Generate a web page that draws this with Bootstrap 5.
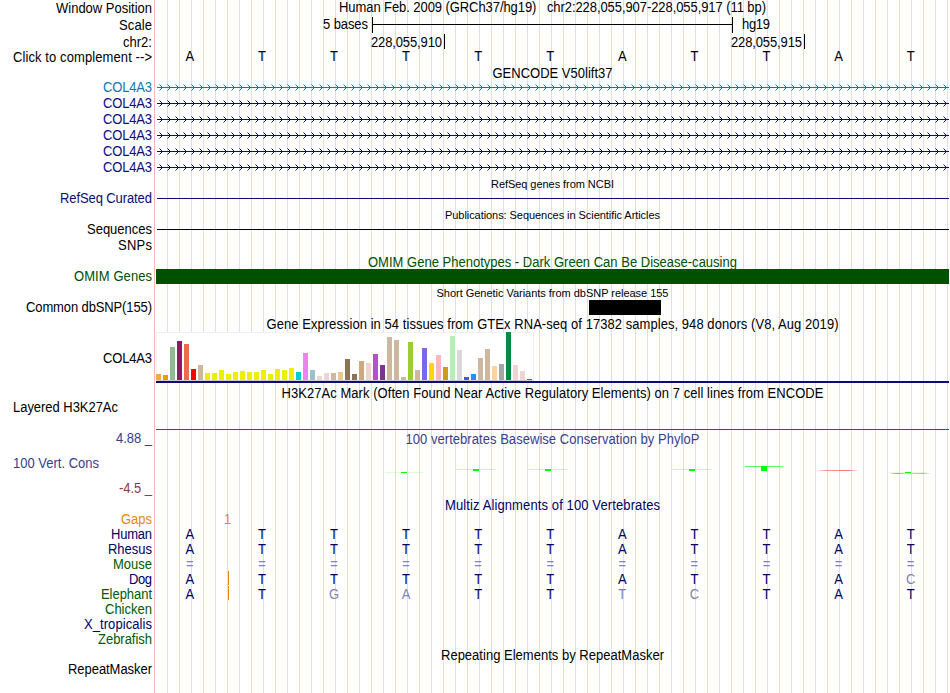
<!DOCTYPE html>
<html lang="en">

<head>
    <meta charset="UTF-8">
    <meta name="viewport" content="width=device-width, initial-scale=1.0">
    <title>Genome Browser</title>
    <link href="https://cdn.jsdelivr.net/npm/bootstrap@5.3.3/dist/css/bootstrap.min.css" rel="stylesheet">
    <style>
        body {
            font-family: "Liberation Sans", Arial, sans-serif;
            font-size: 13px;
            line-height: 15px;
            color: #000;
            background: #fff;
        }

        #browser {
            width: 949px;
            height: 693px;
        }

        .side {
            width: 155px;
            padding-right: 2px;
            border-right: 1px solid #ffb4b4;
        }

        .side.start {
            padding-left: 13px;
        }

        .lane {
            width: 793px;
            margin-left: 1px;
            background: repeating-linear-gradient(to right, transparent 0 11px, #dcdcff 11px 12px);
        }

        .lane svg {
            display: block;
        }

        /* slightly tall letters, standing on the same baseline */
        .tall {
            display: inline-block;
            transform: scaleY(1.08);
            transform-origin: 0 12px;
        }

        .fine {
            font-size: 11px;
        }

        .base {
            width: 72.09px;
            padding-right: 4.4px;
            text-align: center;
        }

        .pt-px { padding-top: 1px; }
        .gtex-side { padding-top: 19px; }
        .tier { height: 25px; }

        .navy { color: #0c0c78; }
        .sky { color: #0c78b4; }
        .omim { color: #005000; }
        .cons { color: #3c3c8c; }
        .neg { color: #8c3c3c; }
        .gap { color: #e68a0a; }
        .species { color: #000064; }
        .far { color: #005a00; }
        .faded { color: #8282b4; }

        .omim-bar {
            height: 15px;
            background: #005000;
        }

        .snp {
            width: 72px;
            height: 15px;
            margin-left: 433px;
            background: #000;
        }

        .gtex {
            width: 378px;
            height: 49px;
            background: #fff;
            border: 1px solid #f0f0f0;
            border-bottom-color: #ccc;
        }

        .gtex i {
            width: 5px;
            flex: none;
        }

        .bars {
            height: 48px;
            gap: 2px;
            margin: -1px 0 0 -1px;
        }

        .gtex-line {
            height: 2px;
            background: #0c0c78;
        }

        /* insertion mark between the first two bases */
        .gapped {
            position: relative;
        }

        .gapped::after {
            content: "";
            position: absolute;
            left: 72px;
            top: -1px;
            width: 1px;
            height: 14px;
            background: #e68a0a;
        }
    </style>
</head>

<body>

    <main id="browser" class="d-flex flex-column overflow-hidden"></main>

    <script type="text/javascript">

        const box = document.getElementById("browser");

        // text squeezed or spread to w pixels
        const txt = (t, w, cls = "") => `<span class="${cls == "fine" ? "" : "tall"} ${cls}" data-w="${w}">${t}</span>`;

        const row = (h, side, lane, cls = "", sideCls = "text-end") => {
            box.innerHTML += `
            <div class="d-flex flex-shrink-0 text-nowrap" style="height:${h}px">
                <div class="side flex-shrink-0 ${sideCls}">${side}</div>
                <div class="lane flex-shrink-0 ${cls}">${lane}</div>
            </div>`;
        }

        const title = (h, t, w, cls = "") => row(h, "", txt(t, w, cls), "text-center");

        const svg = (h, body) => `<svg width="793" height="${h}">${body}</svg>`;

        const hline = (y, color, x = 1) => `<rect x="${x}" y="${y}" width="${793 - x}" height="1" fill="${color}"/>`;

        // svg label with the same tall letters, x and y are its baseline start
        const label = (x, y, w, t, color = "#000") => `<text transform="translate(${x} ${y}) scale(1 1.08)" textLength="${w}" fill="${color}">${t}</text>`;

        // one cell for each base, faded where it differs from human
        const bases = (s, cls = "") => [...s].map((c, i) => {
            let dim = c != "ATTTTTATTAT"[i];
            return `<span class="base tall ${dim ? "faded" : cls}">${c}</span>`;
        }).join("");

        // header
        row(17, txt("Window Position", 96), txt("Human Feb. 2009 (GRCh37/hg19) &nbsp; chr2:228,055,907-228,055,917 (11 bp)", 427), "text-center", "text-end pt-px");
        row(17, txt("Scale", 33), svg(17, `
            ${label(167, 12, 45, "5 bases")}
            <path d="M216.5 0V16M576.5 0V16M216 7.5H577" stroke="#000"/>
            ${label(586, 12, 28, "hg19")}`), "", "text-end pt-px");
        row(15, txt("chr2:", 29), svg(15, `
            ${label(215, 13, 71, "228,055,910")}
            ${label(575, 13, 71, "228,055,915")}
            <path d="M288.5 0V15M648.5 0V15" stroke="#000"/>`), "", "text-end pt-px");
        row(17, txt("Click to complement --&gt;", 139), bases("ATTTTTATTAT"), "d-flex", "text-end pt-px");

        // gencode transcripts
        title(14, "GENCODE V50lift37", 120);
        for (let i = 0; i < 6; i++) {
            let color = i == 0 ? "#0c78b4" : "#0c0c78";
            let d = "";
            for (let x = 3.5; x < 793; x += 8) {
                d += `M${x} 4.5l3 3l-3 3`;
            }
            row(16, txt("COL4A3", 49, i == 0 ? "sky" : "navy"), svg(16, `${hline(7, color)}<path d="${d}" fill="none" stroke="${color}"/>`));
        }

        title(15, "RefSeq genes from NCBI", 123, "fine");
        row(16, txt("RefSeq Curated", 92, "navy"), svg(16, hline(7, "#0c0c78")));
        title(15, "Publications: Sequences in Scientific Articles", 215, "fine");
        row(16, txt("Sequences", 65), svg(16, hline(7, "#000")));
        row(17, txt("SNPs", 34), "");
        title(14, "OMIM Gene Phenotypes - Dark Green Can Be Disease-causing", 369, "omim");
        row(16, txt("OMIM Genes", 78, "omim"), `<div class="omim-bar"></div>`);
        title(15, "Short Genetic Variants from dbSNP release 155", 232, "fine");
        row(17, txt("Common dbSNP(155)", 126), `<div class="snp"></div>`);

        // gtex expression, [color, height] for each tissue
        title(15, "Gene Expression in 54 tissues from GTEx RNA-seq of 17382 samples, 948 donors (V8, Aug 2019)", 572);
        const tissues = [
            ["FFA54F", 6], ["EE9A00", 5], ["8FBC8F", 33], ["8B1C62", 39], ["EE6A50", 36], ["FF0000", 11], ["CDB79E", 15],
            ...[7, 7, 10, 6, 8, 9, 8, 8, 10, 6, 11, 10, 12].map((h) => ["EEEE00", h]),
            ["00CDCD", 8], ["EE82EE", 27], ["9AC0CD", 10], ["EED5D2", 4], ["EED5D2", 7], ["CDB79E", 7], ["EEC591", 8],
            ["8B7355", 21], ["8B7355", 6], ["CDAA7D", 19], ["EED5D2", 17], ["B452CD", 26], ["7A378B", 15], ["CDB79E", 43],
            ["CDB79E", 40], ["CDB79E", 3], ["9ACD32", 38], ["CDB79E", 10], ["7A67EE", 32], ["FFD700", 17], ["FFB6C1", 25],
            ["CD9B1D", 13], ["B4EEB4", 44], ["D9D9D9", 30], ["3A5FCD", 3], ["1E90FF", 6], ["CDB79E", 22], ["CDB79E", 31],
            ["FFD39B", 14], ["A6A6A6", 16], ["008B45", 48], ["EED5D2", 15], ["EED5D2", 9], ["FF00FF", 1]
        ];
        row(54, txt("COL4A3", 49), `
            <div class="gtex"><div class="bars d-flex align-items-end">
                ${tissues.map(([c, h]) => `<i style="height:${h}px;background:#${c}"></i>`).join("")}
            </div></div>
            <div class="gtex-line"></div>`, "", "text-end gtex-side");

        title(14, "H3K27Ac Mark (Often Found Near Active Regulatory Elements) on 7 cell lines from ENCODE", 542);
        row(31, txt("Layered H3K27Ac", 105), svg(31, hline(29, "#325a5a", 0)), "", "start");

        // conservation, [x, y, height, opacity of the thin line]
        const peaks = [[229, 41, 1, .15], [301, 38, 2, .25], [373, 38, 2, .25], [517, 38, 2, .25], [589, 35, 5, .65], [733, 41, 1, .12]];
        row(67, `
            <div class="text-end cons tier">${txt("4.88 _", 36)}</div>
            <div class="cons tier">${txt("100 Vert. Cons", 86)}</div>
            <div class="text-end neg tier">${txt("-4.5 _", 33)}</div>`, `
            <div class="text-center cons pt-px">${txt("100 vertebrates Basewise Conservation by PhyloP", 294)}</div>
            ${svg(50, `<defs>
                <linearGradient id="loss"><stop offset="0" stop-color="#ff6464" stop-opacity=".2"/><stop offset=".2" stop-color="#ff6464" stop-opacity=".7"/><stop offset=".75" stop-color="#ff6464" stop-opacity=".9"/><stop offset="1" stop-color="#ff6464" stop-opacity=".1"/></linearGradient>
                <linearGradient id="mix"><stop offset="0" stop-color="#b4b43c" stop-opacity=".4"/><stop offset=".15" stop-color="#aaaa32"/><stop offset=".4" stop-color="#c8c882" stop-opacity=".6"/><stop offset=".8" stop-color="#b4aa50" stop-opacity=".8"/><stop offset="1" stop-color="#c8c896" stop-opacity=".1"/></linearGradient>
            </defs>
            ${peaks.map(([x, y, h, o]) => `<rect x="${x}" y="${y - 16}" width="38" height="1" fill="#0f0" opacity="${o}"/>
                <rect x="${x + 16}" y="${y - 16}" width="6" height="${h}" fill="#0f0"/>`).join("")}
            <rect x="662" y="23" width="40" height="1" fill="url(#loss)"/>
            <rect x="735" y="26" width="40" height="1" fill="url(#mix)"/>`)}`, "", "start");

        // multiz alignment
        title(14, "Multiz Alignments of 100 Vertebrates", 215, "species");
        row(15, txt("Gaps", 31, "gap"), svg(15, label(68, 12, 7, "1", "#e68a0a")));
        row(15, txt("Human", 41, "species"), bases("ATTTTTATTAT", "species"), "d-flex");
        row(15, txt("Rhesus", 44, "species"), bases("ATTTTTATTAT", "species"), "d-flex");
        row(15, txt("Mouse", 39, "far"), bases("==========="), "d-flex");
        row(15, txt("Dog", 23, "species"), bases("ATTTTTATTAC", "species"), "d-flex gapped");
        row(15, txt("Elephant", 51, "far"), bases("ATGATTTCTAT", "species"), "d-flex gapped");
        row(15, txt("Chicken", 47, "far"), "");
        row(15, txt("X_tropicalis", 68, "species"), "");
        row(16, txt("Zebrafish", 54, "far"), "");

        title(14, "Repeating Elements by RepeatMasker", 223);
        row(31, txt("RepeatMasker", 84), "");

        // fit every label to its width
        document.querySelectorAll("[data-w]").forEach((el) => {
            let w = el.getBoundingClientRect().width;
            let gap = (el.dataset.w - w) / (el.textContent.length - 1);
            el.style.letterSpacing = gap + "px";
            el.style.marginRight = -gap + "px";
        });

    </script>

    <script src="https://cdn.jsdelivr.net/npm/bootstrap@5.3.3/dist/js/bootstrap.bundle.min.js"></script>
</body>

</html>
